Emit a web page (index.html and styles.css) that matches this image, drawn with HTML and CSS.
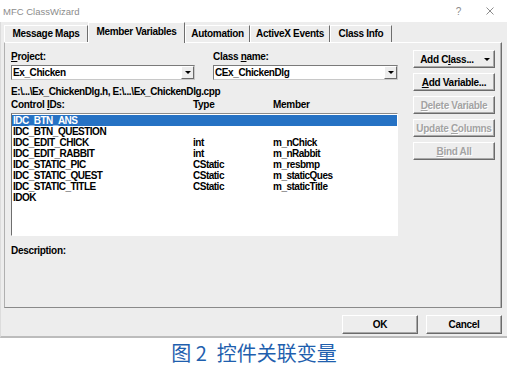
FILE: index.html
```html
<!DOCTYPE html>
<html lang="zh">
<head>
    <meta charset="UTF-8">
    <meta name="viewport" content="width=device-width, initial-scale=1.0">
    <title>MFC ClassWizard</title>
    <link rel="stylesheet" href="styles.css">
</head>
<body>
<div class="window">
  <div class="titlebar">
    <span class="title">MFC ClassWizard</span>
    <span class="help">?</span>
    <svg class="close" width="8" height="8" viewBox="0 0 8 8"><path d="M0.5 0.5L7.5 7.5M7.5 0.5L0.5 7.5" stroke="#8c8c8c" stroke-width="1" fill="none"/></svg>
  </div>

  <div class="dialog">
    <div class="tabs">
      <div class="tab tab-maps">Message Maps</div>
      <div class="tab tab-vars active">Member Variables</div>
      <div class="tab tab-auto">Automation</div>
      <div class="tab tab-events">ActiveX Events</div>
      <div class="tab tab-info">Class Info</div>
    </div>

    <div class="panel">
      <div class="main">
        <div class="fields">
          <div class="label"><u>P</u>roject:</div>
          <div class="label">Class <u>n</u>ame:</div>
          <div class="combo"><span class="combo-text">Ex_Chicken</span><span class="combo-btn"></span></div>
          <div class="combo"><span class="combo-text">CEx_ChickenDlg</span><span class="combo-btn"></span></div>
        </div>

        <div class="path">E:\...\Ex_ChickenDlg.h, E:\...\Ex_ChickenDlg.cpp</div>

        <div class="head">
          <span>Control <u>I</u>Ds:</span>
          <span>Type</span>
          <span>Member</span>
        </div>

        <div class="list">
          <div class="row selected"><span>IDC_BTN_ANS</span><span></span><span></span></div>
          <div class="row"><span>IDC_BTN_QUESTION</span><span></span><span></span></div>
          <div class="row"><span>IDC_EDIT_CHICK</span><span>int</span><span>m_nChick</span></div>
          <div class="row"><span>IDC_EDIT_RABBIT</span><span>int</span><span>m_nRabbit</span></div>
          <div class="row"><span>IDC_STATIC_PIC</span><span>CStatic</span><span>m_resbmp</span></div>
          <div class="row"><span>IDC_STATIC_QUEST</span><span>CStatic</span><span>m_staticQues</span></div>
          <div class="row"><span>IDC_STATIC_TITLE</span><span>CStatic</span><span>m_staticTitle</span></div>
          <div class="row"><span>IDOK</span><span></span><span></span></div>
        </div>

        <div class="desc">Description:</div>
      </div>

      <div class="side">
        <div class="btn btn-split"><span>Add C<u>l</u>ass...</span><span class="arrow"></span></div>
        <div class="btn"><span><u>A</u>dd Variable...</span></div>
        <div class="btn disabled"><span><u>D</u>elete Variable</span></div>
        <div class="btn disabled"><span>Update <u>C</u>olumns</span></div>
        <div class="btn disabled"><span><u>B</u>ind All</span></div>
      </div>
    </div>

    <div class="footer">
      <div class="btn"><span>OK</span></div>
      <div class="btn"><span>Cancel</span></div>
    </div>
  </div>
</div>

<div class="caption">图 2&ensp;控件关联变量</div>
</body>
</html>
```

FILE: styles.css
```css
body {
    margin: 0;
    background: #fff;
    font: bold 10px "Liberation Sans", Arial, sans-serif;
    letter-spacing: -0.3px;
    color: #000;
}

u {
    text-decoration: underline;
    text-underline-offset: 1px;
}

.window {
    width: 507px;
}

/* title bar */
.titlebar {
    display: flex;
    align-items: center;
    height: 22px;
    padding-left: 3px;
    background: #fff;
}

.title {
    flex: 1;
    color: #8c8c8c;
    font-weight: normal;
    font-size: 9.5px;
    letter-spacing: 0;
}

.help {
    color: #8c8c8c;
    font-weight: normal;
    font-size: 10px;
    margin-right: 25px;
}

.close {
    margin-right: 13px;
}

/* dialog body */
.dialog {
    background: #ededed;
    padding: 0 5px 0 3px;
    border-left: 1px solid #dcdcdc;
    border-bottom: 2px solid #bcbcbc;
}

.tabs {
    display: flex;
    align-items: flex-end;
    height: 20px;
}

.tab {
    box-sizing: border-box;
    height: 17px;
    line-height: 15px;
    text-align: center;
    white-space: nowrap;
    border-top: 1px solid #fff;
    border-left: 1px solid #fff;
    border-right: 1px solid #6e6e6e;
}

.tab-maps { width: 84px; }
.tab-vars { width: 97px; }
.tab-auto { width: 65px; }
.tab-events { width: 80px; }
.tab-info { width: 62px; }

.tab.active {
    position: relative;
    z-index: 1;
    height: 21px;
    line-height: 18px;
    margin-bottom: -1px;
    background: #ededed;
}

.panel {
    display: grid;
    grid-template-columns: 387px 82px;
    column-gap: 15px;
    box-sizing: border-box;
    height: 266px;
    padding: 8px 0 0 6px;
    border: 1px solid;
    border-color: #fff #6e6e6e #8a8a8a #b0b0b0;
    box-shadow: inset -1px 0 0 #b4b4b4;
}

.fields {
    display: grid;
    grid-template-columns: 184px 185px;
    column-gap: 18px;
    row-gap: 2px;
}

.label {
    line-height: 12px;
}

.combo {
    display: flex;
    box-sizing: border-box;
    height: 15px;
    background: #fff;
    border: 1px solid;
    border-color: #7a7a7a #c8c8c8 #c8c8c8 #7a7a7a;
}

.combo-text {
    flex: 1;
    padding-left: 1px;
    line-height: 13px;
    letter-spacing: -0.4px;
}

.combo-btn {
    display: flex;
    align-items: center;
    justify-content: center;
    box-sizing: border-box;
    width: 13px;
    background: #ededed;
    border: 1px solid;
    border-color: #fff #6b6b6b #6b6b6b #fff;
}

.combo-btn::after,
.arrow {
    content: "";
    border-left: 3px solid transparent;
    border-right: 3px solid transparent;
    border-top: 3px solid #000;
}

.path {
    margin-top: 6px;
    line-height: 12px;
    letter-spacing: -0.4px;
}

.head {
    display: grid;
    grid-template-columns: 182px 80px 1fr;
    margin-top: 1px;
    line-height: 12px;
}

.list {
    box-sizing: border-box;
    height: 123px;
    margin-top: 2px;
    padding-top: 1px;
    background: #fff;
    border: 1px solid;
    border-color: #8a8a8a #fff #fff #6e6e6e;
}

.row {
    display: grid;
    grid-template-columns: 180px 80px 1fr;
    height: 11px;
    line-height: 11px;
    padding-left: 1px;
    letter-spacing: -0.5px;
}

.row.selected {
    background: #2672c4;
    color: #fff;
}

.desc {
    margin-top: 9px;
    line-height: 12px;
}

.side {
    display: flex;
    flex-direction: column;
    gap: 5px;
    margin-top: -1px;
}

/* push buttons */
.btn {
    display: flex;
    align-items: center;
    justify-content: center;
    box-sizing: border-box;
    height: 18px;
    white-space: nowrap;
    background: #ededed;
    border: 1px solid;
    border-color: #fff #6b6b6b #6b6b6b #fff;
    box-shadow: inset -1px -1px 0 #a8a8a8;
}

.btn-split {
    gap: 10px;
    padding-left: 2px;
}

.btn.disabled {
    color: #a3a3a3;
    text-shadow: 1px 1px 0 #fff;
}

.footer {
    display: flex;
    justify-content: flex-end;
    gap: 8px;
    padding: 7px 0 2px;
}

.footer .btn {
    width: 76px;
    height: 19px;
}

.caption {
    text-align: center;
    font: 20px "Noto Sans CJK SC", sans-serif;
    line-height: 30px;
    color: #1f5fae;
    letter-spacing: 0;
}
```
